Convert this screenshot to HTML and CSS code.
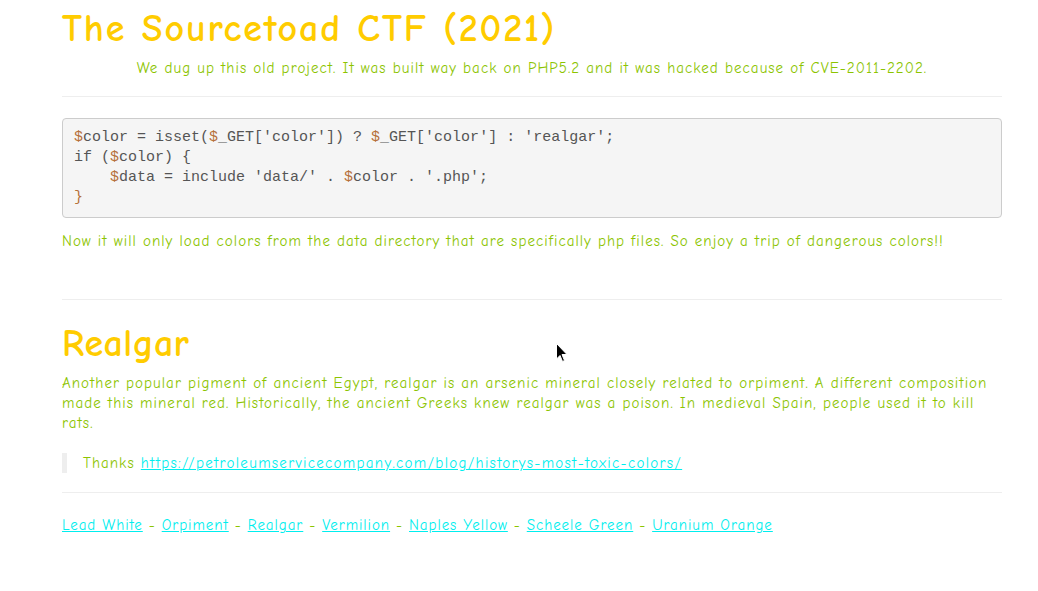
FILE: index.html
```html
<!DOCTYPE html>
<html>
<head>
<meta charset="utf-8">
<title>The Sourcetoad CTF (2021)</title>
<link rel="stylesheet" href="styles.css">
</head>
<body>
<div class="container">
  <h1 class="title">The Sourcetoad CTF (2021)</h1>
  <p class="lead">We dug up this old project. It was built way back on PHP5.2 and it was hacked because of CVE-2011-2202.</p>
  <hr class="rule rule-top">
  <pre class="code"><span class="d">$</span>color = isset(<span class="d">$</span>_GET['color']) ? <span class="d">$</span>_GET['color'] : 'realgar';
if (<span class="d">$</span>color) {
    <span class="d">$</span>data = include 'data/' . <span class="d">$</span>color . '.php';
<span class="d">}</span></pre>
  <p class="note">Now it will only load colors from the data directory that are specifically php files. So enjoy a trip of dangerous colors!!</p>
  <hr class="rule rule-mid">
  <h1 class="heading">Realgar</h1>
  <p class="desc">Another popular pigment of ancient Egypt, realgar is an arsenic mineral closely related to orpiment. A different composition made this mineral red. Historically, the ancient Greeks knew realgar was a poison. In medieval Spain, people used it to kill rats.</p>
  <blockquote class="quote">Thanks <a class="source" href="#">https://petroleumservicecompany.com/blog/historys-most-toxic-colors/</a></blockquote>
  <hr class="rule rule-low">
  <p class="links"><a href="#">Lead White</a> - <a href="#">Orpiment</a> - <a href="#">Realgar</a> - <a href="#">Vermilion</a> - <a href="#">Naples Yellow</a> - <a href="#">Scheele Green</a> - <a href="#">Uranium Orange</a></p>
</div>
<svg class="cursor" width="12" height="20" viewBox="0 0 12 20"><path d="M0.5 0.5 L0.5 16 L4 12.5 L6.5 18.5 L8.5 17.5 L6 11.5 L11 11.5 Z" fill="#000" stroke="#fff" stroke-width="1"/></svg>
</body>
</html>
```

FILE: styles.css
```css
html, body {
  margin: 0;
  padding: 0;
  background: #fff;
}
body {
  font-family: "Comic Sans MS", "Comic Neue", "DejaVu Sans", sans-serif;
  font-size: 15px;
  letter-spacing: 1.05px;
  line-height: 20px;
  color: #8cc400;
}
.container {
  width: 940px;
  margin: 0 0 0 62px;
}
h1 {
  font-family: "Comic Sans MS", "Comic Neue", "DejaVu Sans Condensed", sans-serif;
  font-weight: bold;
  color: #ffcc00;
  font-size: 38px;
  line-height: 40px;
  margin: 0;
}
.title {
  margin-top: 9px;
  letter-spacing: 1.9px;
}
.heading {
  margin-top: 24px;
  letter-spacing: 0.4px;
}
.lead {
  text-align: center;
  margin: 9px 0 0;
}
.rule {
  border: 0;
  border-top: 1px solid #eee;
  margin: 0;
  height: 0;
}
.rule-top { margin-top: 18px; }
.code {
  margin: 21px 0 0;
  padding: 9px 11px;
  background: #f5f5f5;
  border: 1px solid #ccc;
  border-radius: 4px;
  font-family: "Courier New", "Liberation Mono", monospace;
  font-size: 15px;
  letter-spacing: 0;
  line-height: 20px;
  color: #555;
}
.code .d { color: #b5703a; }
.note { margin: 13px 0 0; }
.rule-mid { margin-top: 48px; }
.desc { margin: 9px 0 0; }
.quote {
  margin: 20px 0 0;
  padding: 0 0 0 16px;
  border-left: 5px solid #eee;
}
.source { letter-spacing: 1.3px; }
.rule-low { margin-top: 19px; }
.links {
  margin: 22px 0 0;
  letter-spacing: 0.95px;
}
a { color: #00eeee; text-decoration: underline; }
.cursor {
  position: absolute;
  left: 556px;
  top: 343px;
}
```
